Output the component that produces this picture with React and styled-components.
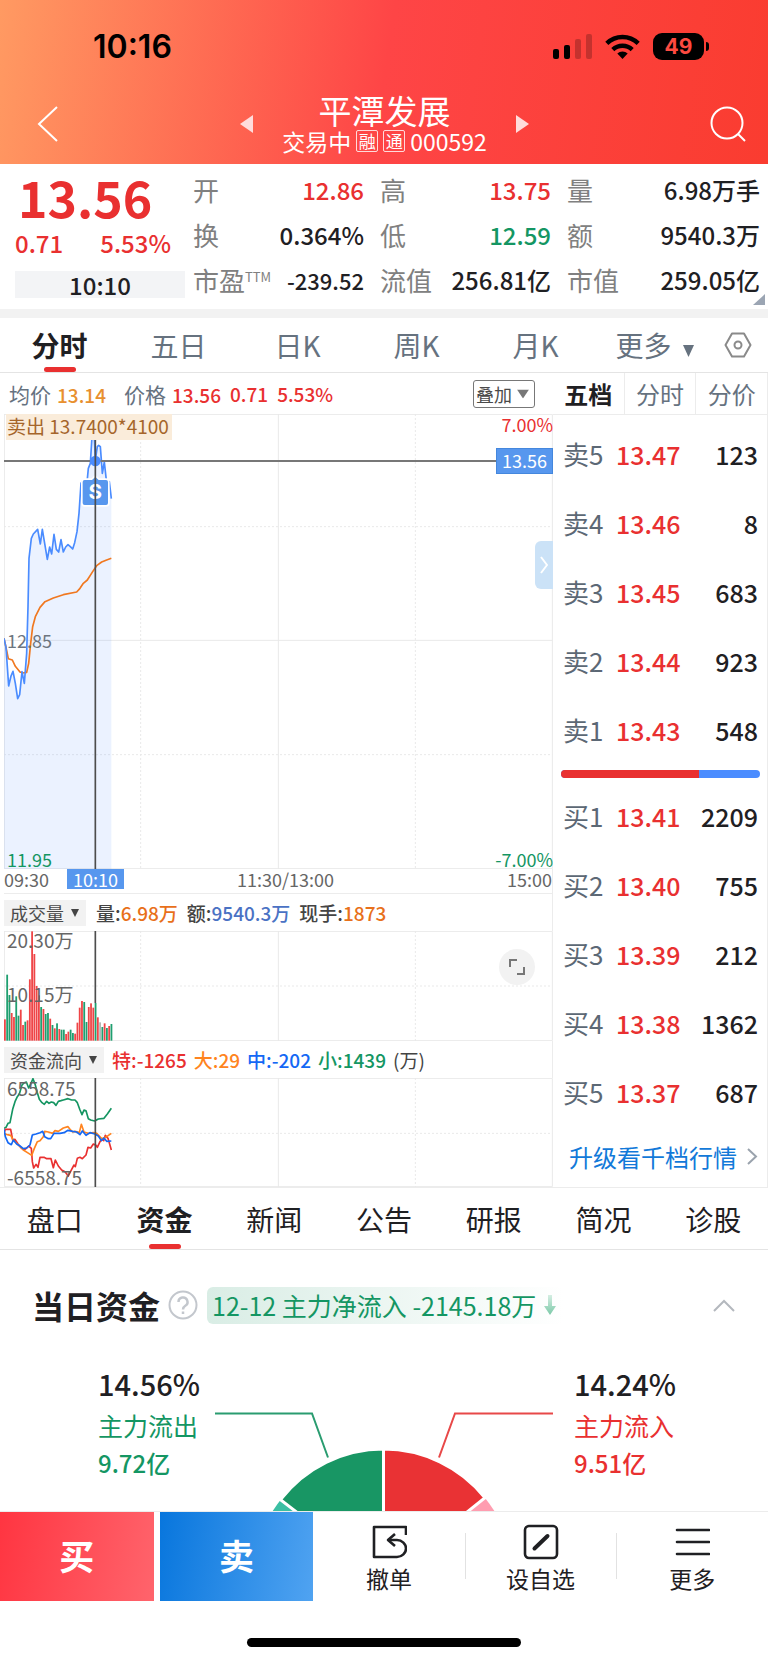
import React from 'react';
import styled, { createGlobalStyle, css } from 'styled-components';

const colors = {
  red: '#e93030',
  green: '#149663',
  orange: '#e8701a',
  amber: '#e8902f',
  blue: '#4a8cff',
  tag: '#5797ee',
  text: '#1f2023',
  slate: '#66727f',
  grey: '#808080',
  line: '#ececec',
};

const GlobalStyle = createGlobalStyle`
  * {
    box-sizing: border-box;
  }
  body {
    margin: 0;
    background: #ffffff;
    color: ${colors.text};
    font-family: "Noto Sans CJK SC", sans-serif;
  }
  button, select {
    margin: 0;
    padding: 0;
    border: 0;
    background: transparent;
    color: inherit;
    font-family: inherit;
    cursor: pointer;
  }
  svg {
    display: block;
  }
`;

const Page = styled.div`
  display: flex;
  flex-direction: column;
  min-width: 640px;
`;

/* ---------- header ---------- */

const Header = styled.header`
  height: 164px;
  background: linear-gradient(98deg, #ff9a62 0%, #fe4546 50%, #fa3c30 100%);
`;

const StatusBar = styled.div`
  display: flex;
  align-items: center;
  height: 92px;
  padding: 0 59px 0 93px;
  color: #000000;
`;

const Clock = styled.span`
  flex: 1;
  font-family: Inter, sans-serif;
  font-size: 32px;
  font-weight: 600;
`;

const StatusIcons = styled.div`
  display: flex;
  align-items: center;
  gap: 13px;
`;

const Battery = styled.div`
  display: flex;
  align-items: center;
  gap: 2px;
`;

const BatteryLevel = styled.span`
  width: 51px;
  border-radius: 9px;
  background: #000000;
  color: #fd4a40;
  font-family: Inter, sans-serif;
  font-size: 21px;
  font-weight: 700;
  line-height: 27px;
  text-align: center;
`;

const BatteryTip = styled.span`
  width: 3px;
  height: 9px;
  border-radius: 0 4px 4px 0;
  background: #000000;
`;

const NavBar = styled.nav`
  display: flex;
  align-items: center;
  justify-content: space-between;
  height: 64px;
  padding: 0 20px 0 37px;
`;

const IconButton = styled.button`
  display: flex;
  align-items: center;
  justify-content: center;
`;

const StockSwitch = styled.div`
  display: flex;
  align-items: center;
  gap: 29px;
`;

const StockTitle = styled.div`
  text-align: center;
  color: #ffffff;
`;

const StockName = styled.h1`
  margin: 0;
  font-size: 33px;
  font-weight: 400;
  line-height: 34px;
`;

const StockState = styled.div`
  display: flex;
  align-items: center;
  gap: 5px;
  font-size: 23px;
  line-height: 28px;
`;

const StateTag = styled.span`
  width: 22px;
  border: 1px solid rgba(255, 255, 255, 0.8);
  border-radius: 2px;
  font-size: 17px;
  line-height: 20px;
  text-align: center;
`;

/* ---------- quote ---------- */

const Quote = styled.section`
  position: relative;
  display: flex;
  gap: 8px;
  height: 154px;
  padding: 3px 8px 0 15px;
  border-bottom: 9px solid #f2f2f2;
`;

const QuoteMain = styled.div`
  width: 170px;
  color: ${colors.red};
`;

const LastPrice = styled.div`
  padding-left: 3px;
  font-size: 50px;
  font-weight: 700;
  line-height: 58px;
`;

const PriceChange = styled.div`
  display: flex;
  justify-content: space-between;
  padding-right: 14px;
  font-size: 24px;
  font-weight: 500;
  line-height: 36px;
`;

const QuoteTime = styled.div`
  margin-top: 10px;
  background: #f3f4f6;
  color: ${colors.text};
  font-size: 24px;
  font-weight: 500;
  line-height: 27px;
  text-align: center;
`;

const QuoteGrid = styled.dl`
  flex: 1;
  display: grid;
  grid-template-columns: 171fr 171fr 193fr;
  grid-auto-rows: 45px;
  column-gap: 16px;
  margin: 0;
`;

const QuoteCell = styled.div`
  display: flex;
  align-items: center;
  justify-content: space-between;
  line-height: 44px;
  white-space: nowrap;

  dt {
    color: ${colors.grey};
    font-size: 26px;
  }
  dd {
    margin: 0;
    color: ${({ $color }) => $color || colors.text};
    font-size: ${({ $small }) => ($small ? 22 : 24)}px;
    font-weight: 500;
  }
  sup {
    font-size: 13px;
    line-height: 13px;
    vertical-align: 9px;
  }
`;

const Corner = styled.svg`
  position: absolute;
  right: 3px;
  bottom: 4px;
`;

/* ---------- tabs ---------- */

const TabBar = styled.div`
  display: flex;
  align-items: stretch;
  height: ${({ $height }) => $height}px;
  border-bottom: 1px solid #e4e4e4;
`;

const Tab = styled.button`
  position: relative;
  flex: 1;
  color: ${({ $muted }) => ($muted ? colors.slate : colors.text)};
  font-size: 28px;
  white-space: nowrap;

  ${({ $active }) => $active && css`
    color: ${colors.text};
    font-weight: 700;

    &::after {
      content: "";
      position: absolute;
      left: 50%;
      bottom: 0;
      width: 32px;
      height: 5px;
      margin-left: -16px;
      border-radius: 3px;
      background: ${colors.red};
    }
  `}
`;

const TabArrow = styled.svg`
  display: inline-block;
  margin-left: 11px;
`;

const SettingButton = styled(IconButton)`
  width: 54px;
  padding-right: 6px;
`;

/* ---------- trading area ---------- */

const Trading = styled.section`
  display: flex;
  align-items: stretch;
  border-bottom: 1px solid ${colors.line};
`;

const Charts = styled.div`
  flex: 1;
  min-width: 0;
  padding-left: 4px;
`;

const InfoRow = styled.div`
  display: flex;
  align-items: center;
  gap: 9px;
  height: 41px;
  padding: 0 18px 0 5px;
  font-size: 19px;
  font-weight: 500;
  white-space: nowrap;
`;

const InfoItem = styled.span`
  color: ${({ $color }) => $color};
`;

const InfoLabel = styled.span`
  margin-right: 6px;
  color: ${colors.slate};
  font-size: 21px;
  font-weight: 400;
`;

const Spacer = styled.span`
  flex: 1;
`;

const Dropdown = styled.span`
  position: relative;
  display: inline-flex;
  margin-right: ${({ $outlined }) => ($outlined ? 0 : 1)}px;
  border: ${({ $outlined }) => ($outlined ? '1px solid #777777' : '0')};
  border-radius: ${({ $outlined }) => ($outlined ? 3 : 0)}px;
  background: ${({ $outlined }) => ($outlined ? '#ffffff' : '#f2f2f2')};

  select {
    appearance: none;
    height: 26px;
    padding: ${({ $outlined }) => ($outlined ? '0 22px 0 2px' : '0 22px 0 6px')};
    outline: 0;
    color: #4a4a4a;
    font-size: 18px;
    line-height: 24px;
  }
  svg {
    position: absolute;
    top: 50%;
    right: ${({ $outlined }) => ($outlined ? 5 : 7)}px;
    transform: translateY(-50%);
    pointer-events: none;
  }
`;

const Plot = styled.div`
  position: relative;
  height: ${({ $height }) => $height}px;

  > svg {
    width: 100%;
    height: 100%;
  }
`;

const PlotLabel = styled.span`
  position: absolute;
  ${({ $side }) => ($side === 'right' ? 'right: 0;' : 'left: 3px;')}
  ${({ $top }) => ($top !== undefined ? `top: ${$top}px;` : 'bottom: 0;')}
  color: ${({ $color }) => $color || '#666666'};
  font-size: ${({ $size }) => $size || 18}px;
  line-height: 20px;
`;

const TradeNote = styled.span`
  position: absolute;
  top: 0;
  left: 2px;
  padding: 0 3px 2px 1px;
  background: #faecda;
  color: #a5652a;
  font-size: 19px;
  line-height: 24px;
`;

const PriceTag = styled.span`
  position: absolute;
  top: 34px;
  right: 0;
  padding: 0 5px 2px 5px;
  border: 1px solid #4487dd;
  background: ${colors.tag};
  color: #ffffff;
  font-size: 18px;
  line-height: 22px;
`;

const SideHandle = styled.button`
  position: absolute;
  top: 127px;
  right: 0;
  width: 18px;
  height: 48px;
  border-radius: 6px 0 0 6px;
  background: #cbe2f7;

  svg {
    margin: 0 auto;
  }
`;

const TimeAxis = styled.div`
  position: relative;
  display: grid;
  grid-template-columns: 60px 1fr auto;
  height: 25px;
  border-bottom: 1px solid ${colors.line};
  border-right: 1px solid ${colors.line};
  color: #666666;
  font-size: 18px;
  line-height: 20px;
`;

const TimeMiddle = styled.span`
  text-align: center;
`;

const TimeTag = styled.span`
  position: absolute;
  left: 63px;
  padding: 0 6px;
  background: ${colors.tag};
  color: #ffffff;
`;

const StatRow = styled.div`
  display: flex;
  align-items: center;
  gap: ${({ $tight }) => ($tight ? 7 : 9)}px;
  height: 37px;
  border-right: 1px solid ${colors.line};
  color: #444444;
  font-size: 19px;
  font-weight: 500;
  white-space: nowrap;
`;

const Stat = styled.span`
  color: ${({ $color }) => $color};
  font-weight: ${({ $light }) => ($light ? 400 : 500)};
`;

const ExpandButton = styled(IconButton)`
  position: absolute;
  top: 18px;
  right: 18px;
  width: 36px;
  height: 36px;
  border-radius: 50%;
  background: #f2f2f2;
`;

/* ---------- order book ---------- */

const Book = styled.aside`
  display: flex;
  flex-direction: column;
  width: 215px;
  border-right: 1px solid ${colors.line};
`;

const BookTabs = styled.div`
  display: flex;
  height: 42px;
  border-bottom: 1px solid ${colors.line};
`;

const BookTab = styled.button`
  flex: 1;
  border-left: 1px solid ${colors.line};
  color: ${({ $active }) => ($active ? colors.text : colors.slate)};
  font-size: 24px;
  font-weight: ${({ $active }) => ($active ? 700 : 400)};

  &:first-child {
    border-left: 0;
  }
`;

const BookTable = styled.table`
  width: 100%;
  margin-top: ${({ $first }) => ($first ? 4 : 0)}px;
  border-collapse: collapse;
  font-size: 25px;
  font-weight: 500;

  tr {
    height: 69px;
  }
  th, td {
    padding: 0;
  }
  th {
    width: 63px;
    padding-left: 10px;
    color: #5c6875;
    font-size: 26px;
    font-weight: 400;
    text-align: left;
  }
  td {
    color: ${colors.red};
  }
  td:last-child {
    padding-right: 9px;
    color: ${colors.text};
    text-align: right;
  }
`;

const Meter = styled.div`
  display: flex;
  height: 8px;
  margin: 6px 7px 3px 8px;
  border-radius: 4px;
  overflow: hidden;
  background: ${colors.blue};
`;

const MeterFill = styled.div`
  background: ${colors.red};
`;

const UpgradeLink = styled.a`
  flex: 1;
  display: flex;
  align-items: center;
  gap: 10px;
  padding-left: 16px;
  color: #1279d9;
  font-size: 24px;
  text-decoration: none;
  white-space: nowrap;
`;

/* ---------- fund section ---------- */

const FundHead = styled.div`
  display: flex;
  align-items: center;
  height: 110px;
  padding: 0 33px 0 32px;
`;

const FundTitle = styled.h2`
  margin: 0;
  font-size: 32px;
  font-weight: 700;
  white-space: nowrap;
`;

const HelpButton = styled(IconButton)`
  margin: 0 9px 0 8px;
`;

const FundChip = styled.div`
  display: flex;
  align-items: center;
  gap: 8px;
  padding: 0 8px 0 5px;
  border-radius: 6px;
  background: linear-gradient(90deg, #d9ede5, #ffffff);
  color: ${colors.green};
  font-size: 25px;
  line-height: 37px;
  white-space: nowrap;
`;

const FundPie = styled.div`
  display: grid;
  grid-template-columns: 1fr 338px 1fr;
  height: 151px;
  overflow: hidden;
`;

const FundSide = styled.div`
  justify-self: ${({ $right }) => ($right ? 'start' : 'end')};
  padding: ${({ $right }) => ($right ? '0 0 0 21px' : '0 15px 0 0')};
  color: ${({ $color }) => $color};
  font-size: 25px;
  line-height: 38px;
`;

const FundPercent = styled.div`
  color: ${colors.text};
  font-size: 29px;
  font-weight: 500;
  line-height: 46px;
`;

const FundAmount = styled.div`
  font-size: 24px;
  font-weight: 500;
`;

/* ---------- bottom bar ---------- */

const BottomBar = styled.footer`
  display: flex;
  height: 90px;
  border-top: 1px solid ${colors.line};
`;

const TradeButton = styled.button`
  flex: 0 0 20%;
  margin-right: ${({ $side }) => ($side === 'buy' ? 6 : 0)}px;
  padding-bottom: 4px;
  background: ${({ $side }) => ($side === 'buy'
    ? 'linear-gradient(100deg, #ff3541, #ff646c)'
    : 'linear-gradient(100deg, #0876dd, #50a3f1)')};
  color: #ffffff;
  font-size: 35px;
  font-weight: 700;
`;

const Action = styled.button`
  position: relative;
  flex: 1;
  display: flex;
  flex-direction: column;
  align-items: center;
  padding-top: 12px;
  font-size: 23px;
  line-height: 36px;

  & + &::before {
    content: "";
    position: absolute;
    top: 21px;
    left: 0;
    width: 1px;
    height: 46px;
    background: #e2e2e2;
  }
`;

const HomeArea = styled.div`
  display: flex;
  justify-content: center;
  padding: 37px 0 15px;
`;

const HomeIndicator = styled.div`
  width: 274px;
  height: 9px;
  border-radius: 5px;
  background: #000000;
`;

/* ---------- data ---------- */

const quoteItems = [
  { label: '开', value: '12.86', color: colors.red },
  { label: '高', value: '13.75', color: colors.red },
  { label: '量', value: '6.98万手' },
  { label: '换', value: '0.364%' },
  { label: '低', value: '12.59', color: colors.green },
  { label: '额', value: '9540.3万' },
  { label: '市盈', sup: 'TTM', value: '-239.52', small: true },
  { label: '流值', value: '256.81亿' },
  { label: '市值', value: '259.05亿' },
];

const asks = [
  ['卖5', '13.47', '123'],
  ['卖4', '13.46', '8'],
  ['卖3', '13.45', '683'],
  ['卖2', '13.44', '923'],
  ['卖1', '13.43', '548'],
];

const bids = [
  ['买1', '13.41', '2209'],
  ['买2', '13.40', '755'],
  ['买3', '13.39', '212'],
  ['买4', '13.38', '1362'],
  ['买5', '13.37', '687'],
];

const periodTabs = ['分时', '五日', '日K', '周K', '月K'];
const bookTabs = ['五档', '分时', '分价'];
const detailTabs = ['盘口', '资金', '新闻', '公告', '研报', '简况', '诊股'];

const priceLine = '12,715 18,742 26,858 33,828 39,814 46,850 53,896 59,884 66,815 73,850 80,760 84,620 87,475 94,415 100,402 113,388 121,432 127,388 134,430 142,478 149,441 155,462 162,403 169,448 176,456 183,419 190,456 197,441 204,434 211,440 218,447 224,428 231,395 237,340 243,250 250,240 257,290 265,205 271,190 276,110 282,90 286,180 292,140 296,136 301,140 307,220 313,186 320,250 328,245 334,296';
const averageLine = '12,715 18,742 25,776 37,780 46,799 60,816 68,819 80,817 86,790 92,730 98,680 106,650 120,622 135,605 160,594 190,584 230,576 240,565 250,550 262,540 278,515 290,497 305,486 320,480 334,475';

// r: up, g: down, n: flat
const volumes = [
  ['r', 64], ['g', 198], ['g', 137], ['r', 83], ['r', 71], ['g', 133], ['g', 75], ['r', 93],
  ['r', 47], ['g', 57], ['r', 61], ['r', 184], ['r', 328], ['r', 260], ['r', 164], ['r', 136],
  ['g', 101], ['r', 95], ['g', 80], ['g', 83], ['r', 66], ['g', 47], ['r', 37], ['g', 52],
  ['r', 35], ['g', 33], ['g', 33], ['r', 20], ['r', 27], ['g', 33], ['g', 23], ['r', 21],
  ['r', 54], ['r', 99], ['r', 119], ['g', 116], ['g', 56], ['r', 101], ['r', 112], ['r', 99],
  ['g', 113], ['r', 70], ['n', 55], ['g', 41], ['r', 52], ['g', 38], ['r', 44], ['g', 50],
];
const volumeColors = { r: '#ef4547', g: '#1f9f70', n: '#b5b5b5' };

const flows = [
  { color: '#159562', points: '12,175 18,172 24,160 30,158 38,118 45,95 52,80 58,72 66,45 73,38 79,36 86,54 93,40 99,26 106,45 112,68 118,88 126,98 133,103 140,94 147,100 154,96 161,98 168,106 175,94 183,92 190,90 204,86 215,90 225,90 232,98 240,120 246,134 252,120 258,122 265,146 272,150 284,153 295,147 312,145 322,132 334,115' },
  { color: '#e93030', points: '12,190 16,178 32,178 38,210 45,208 54,222 62,232 72,240 80,234 86,228 94,235 97,275 101,294 108,283 114,292 120,262 132,262 140,266 153,266 160,293 166,270 175,288 185,300 195,305 205,318 213,302 222,285 226,290 232,265 240,262 247,266 258,255 264,232 272,234 280,222 288,226 292,232 300,215 306,208 311,212 316,196 324,205 334,240' },
  { color: '#ff8420', points: '12,190 22,194 32,196 40,210 55,225 70,240 86,250 95,256 103,235 112,215 120,212 130,200 134,184 145,186 158,190 165,182 175,184 190,174 204,170 210,178 218,186 225,184 238,188 244,163 252,186 265,190 280,188 290,190 305,206 320,200 334,190' },
  { color: '#1468f5', points: '12,178 16,200 24,218 34,224 40,210 50,222 60,228 70,236 80,234 90,225 97,195 108,192 120,188 128,184 134,200 145,206 152,206 162,190 180,190 192,188 204,181 218,184 230,186 240,194 247,183 258,196 270,188 285,192 295,198 304,212 312,204 320,214 334,213' },
];

/* ---------- components ---------- */

const Triangle = ({ width, height, fill, as: Component = 'svg' }) => (
  <Component width={width} height={height} viewBox="0 0 10 10" preserveAspectRatio="none" aria-hidden="true">
    <path d="M0 0h10L5 10z" fill={fill} />
  </Component>
);

const GridLines = ({ top, bottom, rows }) => (
  <g fill="none" stroke="#e9e9e9" strokeWidth="3">
    <path d={`M12 ${top + 1}H1657V${bottom - 1}H13V${top}`} />
    <path d={`M835 ${top}V${bottom}`} />
    <path d={`M422 ${top}V${bottom}M1246 ${top}V${bottom}`} strokeDasharray="6 6" />
    {rows.map(({ y, solid }) => (
      <path key={y} d={`M12 ${y}H1657`} strokeDasharray={solid ? undefined : '6 6'} />
    ))}
  </g>
);

const PriceChart = () => (
  <Plot $height={455}>
    <svg viewBox="12 42 1647 1365" preserveAspectRatio="none">
      <GridLines top={42} bottom={1407} rows={[{ y: 380 }, { y: 721, solid: true }, { y: 1064 }]} />
      <polygon points={`${priceLine} 334,1407 12,1407`} fill={colors.blue} fillOpacity="0.11" />
      <polyline points={averageLine} fill="none" stroke="#f07820" strokeWidth="5" strokeLinejoin="round" />
      <polyline points={priceLine} fill="none" stroke={colors.blue} strokeWidth="5" strokeLinejoin="round" />
      <path d="M12 183H1659" stroke="#777777" strokeWidth="6" />
      <circle cx="286" cy="183" r="16" fill={colors.blue} />
      <path
        d="M254 240h22l10-9 10 9h22q6 0 6 6v63q0 6-6 6h-64q-6 0-6-6v-63q0-6 6-6z"
        fill={colors.tag}
        stroke="#ffffff"
        strokeWidth="10"
        paintOrder="stroke"
      />
      <text x="286" y="297" fill="#ffffff" fontFamily="Inter, sans-serif" fontSize="62" fontWeight="700" textAnchor="middle">S</text>
      <path d="M286 42V1407" stroke="#4d4d4d" strokeWidth="5" />
    </svg>
    <TradeNote>卖出 13.7400*4100</TradeNote>
    <PlotLabel $side="right" $top={0} $color={colors.red}>7.00%</PlotLabel>
    <PriceTag>13.56</PriceTag>
    <PlotLabel $top={216} $color="#6d7680">12.85</PlotLabel>
    <PlotLabel $color={colors.green}>11.95</PlotLabel>
    <PlotLabel $side="right" $color={colors.green}>-7.00%</PlotLabel>
    <SideHandle aria-label="展开">
      <svg width="8" height="18" viewBox="0 0 8 18" fill="none" stroke="#ffffff" strokeWidth="2">
        <path d="M1 1l6 8-6 8" />
      </svg>
    </SideHandle>
  </Plot>
);

const VolumeChart = () => (
  <Plot $height={110}>
    <svg viewBox="12 18 1647 330" preserveAspectRatio="none">
      <GridLines top={18} bottom={348} rows={[{ y: 183 }]} />
      {volumes.map(([kind, height], i) => (
        <rect key={i} x={12 + i * 6.8} y={347 - height} width="5.4" height={height} fill={volumeColors[kind]} />
      ))}
      <path d="M286 18V234" stroke="#4d4d4d" strokeWidth="5" />
    </svg>
    <PlotLabel $size={19} $top={-1}>20.30万</PlotLabel>
    <PlotLabel $size={19} $top={53}>10.15万</PlotLabel>
    <ExpandButton aria-label="全屏">
      <svg width="18" height="18" viewBox="0 0 18 18" fill="none" stroke="#777777" strokeWidth="2">
        <path d="M2 9V2h7M16 9v7H9" />
      </svg>
    </ExpandButton>
  </Plot>
);

const FlowChart = () => (
  <Plot $height={109}>
    <svg viewBox="12 24 1647 327" preserveAspectRatio="none">
      <GridLines top={24} bottom={351} rows={[{ y: 190 }]} />
      {flows.map(({ color, points }) => (
        <polyline key={color} points={points} fill="none" stroke={color} strokeWidth="5" strokeLinejoin="round" />
      ))}
      <path d="M286 24V351" stroke="#4d4d4d" strokeWidth="5" />
    </svg>
    <PlotLabel $size={19} $top={0}>6558.75</PlotLabel>
    <PlotLabel $size={19}>-6558.75</PlotLabel>
  </Plot>
);

const BookRows = ({ rows, first }) => (
  <BookTable $first={first}>
    <tbody>
      {rows.map(([level, price, amount]) => (
        <tr key={level}>
          <th scope="row">{level}</th>
          <td>{price}</td>
          <td>{amount}</td>
        </tr>
      ))}
    </tbody>
  </BookTable>
);

const TopHeader = () => (
  <Header>
    <StatusBar>
      <Clock>10:16</Clock>
      <StatusIcons>
        <svg width="39" height="25" viewBox="0 0 39 25">
          <rect x="0" y="15" width="6" height="10" rx="2" />
          <rect x="11" y="11" width="6" height="14" rx="2" />
          <rect x="22" y="5" width="6" height="20" rx="2" fillOpacity="0.22" />
          <rect x="33" y="0" width="6" height="25" rx="2" fillOpacity="0.22" />
        </svg>
        <svg width="35" height="25" viewBox="0 0 35 25">
          <path d="M17.500 25l-5.200-5.400a7.600 7.600 0 0 1 10.400 0z" />
          <g fill="none" stroke="#000000" strokeWidth="4.400">
            <path d="M1.800 9.400a22.500 22.500 0 0 1 31.400 0" />
            <path d="M7.800 15.600a14 14 0 0 1 19.400 0" />
          </g>
        </svg>
        <Battery>
          <BatteryLevel>49</BatteryLevel>
          <BatteryTip />
        </Battery>
      </StatusIcons>
    </StatusBar>
    <NavBar>
      <IconButton aria-label="返回">
        <svg width="22" height="36" viewBox="0 0 22 36" fill="none" stroke="#ffffff" strokeWidth="2">
          <path d="M20 1L2 18l18 17" />
        </svg>
      </IconButton>
      <StockSwitch>
        <IconButton aria-label="上一只">
          <svg width="13" height="18" viewBox="0 0 13 18"><path d="M13 0v18L0 9z" fill="#ffdcdc" /></svg>
        </IconButton>
        <StockTitle>
          <StockName>平潭发展</StockName>
          <StockState>
            交易中
            <StateTag>融</StateTag>
            <StateTag>通</StateTag>
            <span>000592</span>
          </StockState>
        </StockTitle>
        <IconButton aria-label="下一只">
          <svg width="13" height="18" viewBox="0 0 13 18"><path d="M0 0v18l13-9z" fill="#ffdcdc" /></svg>
        </IconButton>
      </StockSwitch>
      <IconButton aria-label="搜索">
        <svg width="38" height="36" viewBox="0 0 38 36" fill="none" stroke="#ffffff" strokeWidth="2">
          <circle cx="17" cy="17" r="15.500" />
          <path d="M28 28l7 7" />
        </svg>
      </IconButton>
    </NavBar>
  </Header>
);

const App = () => (
  <>
    <GlobalStyle />
    <Page>
      <TopHeader />

      <Quote>
        <QuoteMain>
          <LastPrice>13.56</LastPrice>
          <PriceChange>
            <span>0.71</span>
            <span>5.53%</span>
          </PriceChange>
          <QuoteTime>10:10</QuoteTime>
        </QuoteMain>
        <QuoteGrid>
          {quoteItems.map(({ label, sup, value, color, small }) => (
            <QuoteCell key={label} $color={color} $small={small}>
              <dt>
                {label}
                {sup && <sup>{sup}</sup>}
              </dt>
              <dd>{value}</dd>
            </QuoteCell>
          ))}
        </QuoteGrid>
        <Corner width="12" height="11" viewBox="0 0 12 11">
          <path d="M12 0v11H0z" fill="#9ba5b3" />
        </Corner>
      </Quote>

      <TabBar $height={55}>
        {periodTabs.map((name, i) => (
          <Tab key={name} $muted $active={i === 0}>{name}</Tab>
        ))}
        <Tab $muted>
          更多
          <Triangle as={TabArrow} width={11} height={12} fill={colors.slate} />
        </Tab>
        <SettingButton aria-label="设置">
          <svg width="28" height="26" viewBox="0 0 28 26" fill="none" stroke="#8a8a8a" strokeWidth="2">
            <path d="M8 1.500h12L26.500 13 20 24.500H8L1.500 13z" strokeLinejoin="round" />
            <circle cx="14" cy="13" r="3.500" />
          </svg>
        </SettingButton>
      </TabBar>

      <Trading>
        <Charts>
          <InfoRow>
            <InfoItem $color={colors.amber}><InfoLabel>均价</InfoLabel>13.14</InfoItem>
            <span />
            <InfoItem $color={colors.red}><InfoLabel>价格</InfoLabel>13.56</InfoItem>
            <InfoItem $color={colors.red}>0.71</InfoItem>
            <InfoItem $color={colors.red}>5.53%</InfoItem>
            <Spacer />
            <Dropdown $outlined>
              <select aria-label="叠加"><option>叠加</option></select>
              <Triangle width={12} height={9} fill="#777777" />
            </Dropdown>
          </InfoRow>
          <PriceChart />
          <TimeAxis>
            <span>09:30</span>
            <TimeMiddle>11:30/13:00</TimeMiddle>
            <span>15:00</span>
            <TimeTag>10:10</TimeTag>
          </TimeAxis>
          <StatRow>
            <Dropdown>
              <select aria-label="副图指标一"><option>成交量</option></select>
              <Triangle width={8} height={8} fill="#444444" />
            </Dropdown>
            <span>量:<Stat $color={colors.orange}>6.98万</Stat></span>
            <span>额:<Stat $color="#4a72c4">9540.3万</Stat></span>
            <span>现手:<Stat $color={colors.orange}>1873</Stat></span>
          </StatRow>
          <VolumeChart />
          <StatRow $tight>
            <Dropdown>
              <select aria-label="副图指标二"><option>资金流向</option></select>
              <Triangle width={8} height={8} fill="#444444" />
            </Dropdown>
            <Stat $color={colors.red}>特:-1265</Stat>
            <Stat $color="#ff8420">大:29</Stat>
            <Stat $color="#1468f5">中:-202</Stat>
            <Stat $color={colors.green}>小:1439</Stat>
            <Stat $light>(万)</Stat>
          </StatRow>
          <FlowChart />
        </Charts>

        <Book>
          <BookTabs>
            {bookTabs.map((name, i) => (
              <BookTab key={name} $active={i === 0}>{name}</BookTab>
            ))}
          </BookTabs>
          <BookRows rows={asks} first />
          <Meter>
            <MeterFill style={{ width: `${(138 / 199) * 100}%` }} />
          </Meter>
          <BookRows rows={bids} />
          <UpgradeLink href="#level2">
            升级看千档行情
            <svg width="11" height="17" viewBox="0 0 11 17" fill="none" stroke="#9aa3ad" strokeWidth="2">
              <path d="M1 1l8 7.500L1 16" />
            </svg>
          </UpgradeLink>
        </Book>
      </Trading>

      <TabBar $height={62}>
        {detailTabs.map((name, i) => (
          <Tab key={name} $active={i === 1}>{name}</Tab>
        ))}
      </TabBar>

      <section>
        <FundHead>
          <FundTitle>当日资金</FundTitle>
          <HelpButton aria-label="说明">
            <svg width="30" height="30" viewBox="0 0 30 30" fill="none" stroke="#c3c7cd" strokeWidth="2">
              <circle cx="15" cy="15" r="13.500" />
              <path d="M10.500 12a4.500 4.500 0 1 1 6.800 3.800c-1.600 1-2.300 1.700-2.300 3.600" strokeWidth="2.500" />
              <path d="M15 21.500v2.500" strokeWidth="2.500" />
            </svg>
          </HelpButton>
          <FundChip>
            12-12 主力净流入 -2145.18万
            <svg width="12" height="20" viewBox="0 0 12 20">
              <defs>
                <linearGradient id="arrow" x1="0" y1="0" x2="0" y2="1">
                  <stop offset="0" stopColor="#d5eee3" />
                  <stop offset="1" stopColor="#7cc9a8" />
                </linearGradient>
              </defs>
              <path d="M4 0h4v11h4l-6 9-6-9h4z" fill="url(#arrow)" />
            </svg>
          </FundChip>
          <Spacer />
          <IconButton aria-label="收起">
            <svg width="22" height="13" viewBox="0 0 22 13" fill="none" stroke="#b4b8be" strokeWidth="2">
              <path d="M1 12L11 2l10 10" />
            </svg>
          </IconButton>
        </FundHead>
        <FundPie>
          <FundSide $color={colors.green}>
            <FundPercent>14.56%</FundPercent>
            <div>主力流出</div>
            <FundAmount>9.72亿</FundAmount>
          </FundSide>
          <svg width="338" height="151" viewBox="215 1360 338 151">
            <path d="M383.500 1579L280.500 1500A130 130 0 0 0 253 1579z" fill="#3bbfa3" />
            <path d="M383.500 1579L485 1498A130 130 0 0 1 514 1579z" fill="#ff9db0" />
            <g stroke="#ffffff" strokeWidth="3">
              <path d="M383.500 1579V1449A130 130 0 0 0 280.500 1499.700z" fill="#189664" />
              <path d="M383.500 1579V1449A130 130 0 0 1 485 1497.700z" fill="#e93234" />
            </g>
            <path d="M215 1413.500h97l16 44" fill="none" stroke="#2a9c70" strokeWidth="2" />
            <path d="M553 1413.500h-98l-16 44" fill="none" stroke="#e84848" strokeWidth="2" />
          </svg>
          <FundSide $right $color={colors.red}>
            <FundPercent>14.24%</FundPercent>
            <div>主力流入</div>
            <FundAmount>9.51亿</FundAmount>
          </FundSide>
        </FundPie>
      </section>

      <BottomBar>
        <TradeButton $side="buy">买</TradeButton>
        <TradeButton $side="sell">卖</TradeButton>
        <Action>
          <svg width="36" height="36" viewBox="0 0 36 36" fill="none" stroke="#1f2023" strokeWidth="2.600" strokeLinejoin="round">
            <path d="M35 11V3H3v30h23c5 0 9-4 9-8.500S31 16 26 16h-8" />
            <path d="M24 10l-7 6 7 6" />
          </svg>
          撤单
        </Action>
        <Action>
          <svg width="36" height="36" viewBox="0 0 36 36" fill="none" stroke="#1f2023" strokeWidth="2.600">
            <rect x="2" y="2" width="32" height="32" rx="4" />
            <path d="M11.500 24.500L24.500 12" strokeWidth="4" strokeLinecap="round" />
          </svg>
          设自选
        </Action>
        <Action>
          <svg width="36" height="36" viewBox="0 0 36 36" fill="none" stroke="#1f2023" strokeWidth="2.600" strokeLinecap="round">
            <path d="M3 6h32M3 18h32M3 30h32" />
          </svg>
          更多
        </Action>
      </BottomBar>
      <HomeArea>
        <HomeIndicator />
      </HomeArea>
    </Page>
  </>
);

export default App;
